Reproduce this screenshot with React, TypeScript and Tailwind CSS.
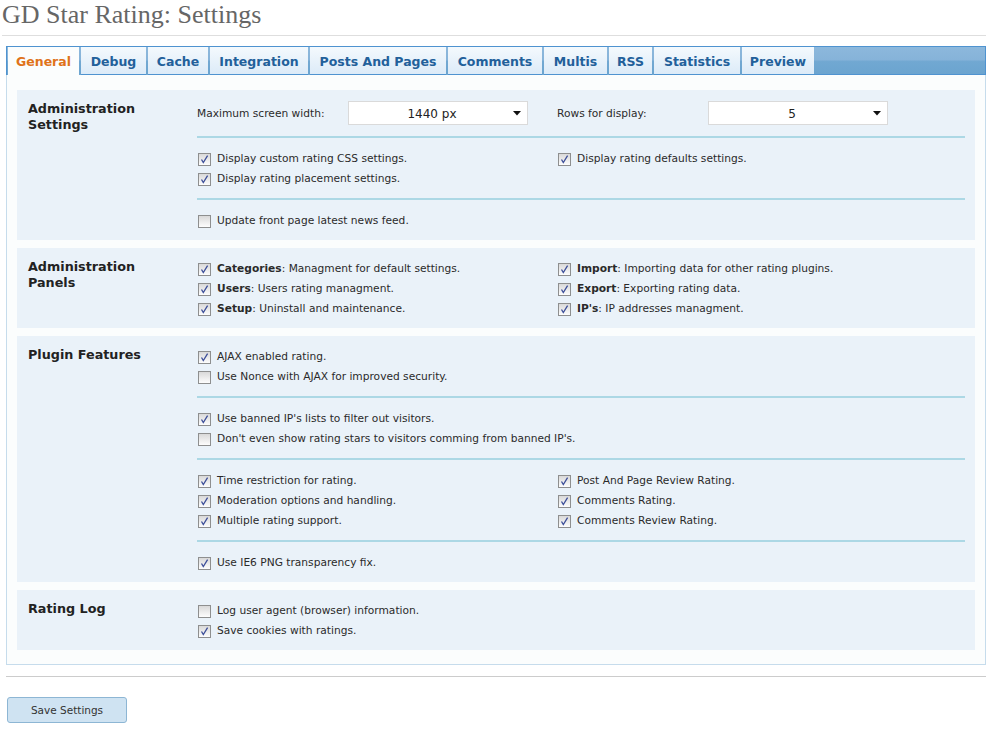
import React from "react";

function Box({ checked }: { checked: boolean }) {
  return (
    <span className="inline-flex w-[13px] h-[13px] shrink-0 border border-[#8e8f8f] bg-[linear-gradient(#d9d9d9,#fdfdfd)] items-center justify-center">
      {checked && (
        <svg width="11" height="11" viewBox="0 0 11 11">
          <path d="M2.5 5.5 L4.3 8.6 L8.6 1.6" fill="none" stroke="#3d4f99" strokeWidth="1.3" />
        </svg>
      )}
    </span>
  );
}

function Check({ checked, children }: { checked: boolean; children: React.ReactNode }) {
  return (
    <div className="h-[20px] pt-[2px] flex items-center whitespace-nowrap">
      <span className="ml-[1px] mr-[6px] flex">
        <Box checked={checked} />
      </span>
      <span>{children}</span>
    </div>
  );
}

function Line() {
  return <div className="h-[2px] bg-[#acd8e5] my-[10px]" />;
}

function Select({ label, value }: { label: string; value: string }) {
  return (
    <div className="flex items-center h-[26px]">
      <span className="w-[151px] pt-[2px]">{label}</span>
      <div className="relative w-[180px] h-[24px] bg-white border border-[#dadada] flex items-center justify-center pr-[12px] pt-[1px] text-[12px] text-[#222]">
        {value}
        <svg className="absolute right-[6px] top-[9px]" width="8" height="5" viewBox="0 0 8 5">
          <path d="M0 0 L8 0 L4 4.5 Z" fill="#111" />
        </svg>
      </div>
    </div>
  );
}

function Section({ title, children }: { title: React.ReactNode; children: React.ReactNode }) {
  return (
    <div className="bg-[#eaf2f9] flex py-[10px] pl-[11px] pr-[10px]">
      <div className="w-[169px] shrink-0 pt-[1px] font-bold text-[12.75px] leading-[16px] text-[#222]">{title}</div>
      <div className="flex-1">{children}</div>
    </div>
  );
}

function Two({ left, right }: { left: React.ReactNode; right: React.ReactNode }) {
  return (
    <div className="grid grid-cols-[360px_1fr]">
      <div>{left}</div>
      <div>{right}</div>
    </div>
  );
}

const tabs: [string, number][] = [
  ["General", 71],
  ["Debug", 65],
  ["Cache", 60],
  ["Integration", 98],
  ["Posts And Pages", 136],
  ["Comments", 94],
  ["Multis", 63],
  ["RSS", 43],
  ["Statistics", 86],
  ["Preview", 72],
];

export default function App() {
  return (
    <div className="w-[996px] h-[731px] bg-white [font-family:'DejaVu_Sans',sans-serif] text-[10.65px] text-[#2a2a2a] overflow-hidden">
      <div className="pl-[2px] pt-[1px] h-[29px] leading-[28px] text-[26px] text-[#666] [font-family:'Liberation_Serif',serif] whitespace-nowrap">
        GD Star Rating: Settings
      </div>
      <div className="ml-[2px] mt-[6px] w-[984px] h-px bg-[#dedede]" />
      <div className="ml-[6px] mt-[10px] w-[980px]">
        <div className="flex h-[29px] border-x border-t border-[#4f93d0] bg-[linear-gradient(#8cb8dc_0%,#86b3d9_45%,#71a8d2_52%,#6ba4cf_100%)] pl-[1px]">
          {tabs.map(([t, w], i) => {
            const active = i === 0;
            return (
              <div key={t} className="flex mr-[2px]">
                {active ? (
                  <div
                    className="h-[28px] pt-[3px] bg-[#fbfdfd] text-[#e0731a] font-bold text-[12.5px] flex items-center justify-center"
                    style={{ width: w }}
                  >
                    {t}
                  </div>
                ) : (
                  <div
                    className="h-[28px] pt-[3px] border-b border-[#4f93d0] bg-[linear-gradient(#f4f9fd,#dcebf8)] text-[#22609a] font-bold text-[12.5px] flex items-center justify-center whitespace-nowrap"
                    style={{ width: w }}
                  >
                    {t}
                  </div>
                )}
              </div>
            );
          })}
          <div className="flex-1 h-[28px] border-b border-[#4f93d0] -ml-[2px]" />
        </div>
        <div className="bg-[#fbfdfd] border-x border-b border-[#c6dcec] pt-[15px] pb-[14px] px-[10px] flex flex-col gap-[8px]">
          <Section title={<>Administration<br />Settings</>}>
            <Two
              left={<Select label="Maximum screen width:" value="1440 px" />}
              right={<Select label="Rows for display:" value="5" />}
            />
            <Line />
            <Two
              left={
                <>
                  <Check checked>Display custom rating CSS settings.</Check>
                  <Check checked>Display rating placement settings.</Check>
                </>
              }
              right={<Check checked>Display rating defaults settings.</Check>}
            />
            <Line />
            <Check checked={false}>Update front page latest news feed.</Check>
          </Section>
          <Section title={<>Administration<br />Panels</>}>
            <Two
              left={
                <>
                  <Check checked><b>Categories</b>: Managment for default settings.</Check>
                  <Check checked><b>Users</b>: Users rating managment.</Check>
                  <Check checked><b>Setup</b>: Uninstall and maintenance.</Check>
                </>
              }
              right={
                <>
                  <Check checked><b>Import</b>: Importing data for other rating plugins.</Check>
                  <Check checked><b>Export</b>: Exporting rating data.</Check>
                  <Check checked><b>IP's</b>: IP addresses managment.</Check>
                </>
              }
            />
          </Section>
          <Section title="Plugin Features">
            <Check checked>AJAX enabled rating.</Check>
            <Check checked={false}>Use Nonce with AJAX for improved security.</Check>
            <Line />
            <Check checked>Use banned IP's lists to filter out visitors.</Check>
            <Check checked={false}>Don't even show rating stars to visitors comming from banned IP's.</Check>
            <Line />
            <Two
              left={
                <>
                  <Check checked>Time restriction for rating.</Check>
                  <Check checked>Moderation options and handling.</Check>
                  <Check checked>Multiple rating support.</Check>
                </>
              }
              right={
                <>
                  <Check checked>Post And Page Review Rating.</Check>
                  <Check checked>Comments Rating.</Check>
                  <Check checked>Comments Review Rating.</Check>
                </>
              }
            />
            <Line />
            <Check checked>Use IE6 PNG transparency fix.</Check>
          </Section>
          <Section title="Rating Log">
            <Check checked={false}>Log user agent (browser) information.</Check>
            <Check checked>Save cookies with ratings.</Check>
          </Section>
        </div>
      </div>
      <div className="ml-[6px] mt-[11px] w-[980px] h-px bg-[#cccccc]" />
      <button className="ml-[7px] mt-[20px] w-[120px] h-[26px] pt-[1px] bg-[#cfe3f2] border border-[#8db6d4] rounded-[3px] text-[10.5px] text-[#333] flex items-center justify-center">
        Save Settings
      </button>
    </div>
  );
}
